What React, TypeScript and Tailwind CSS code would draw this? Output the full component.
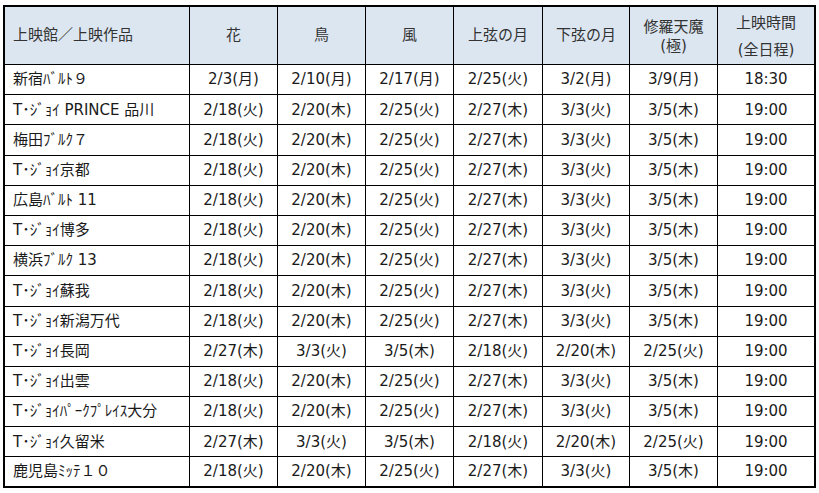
import React from "react";

const A = ["2/18(火)", "2/20(木)", "2/25(火)", "2/27(木)", "3/3(火)", "3/5(木)", "19:00"];
const B = ["2/27(木)", "3/3(火)", "3/5(木)", "2/18(火)", "2/20(木)", "2/25(火)", "19:00"];

const rows: [string, string[]][] = [
  ["新宿ﾊﾞﾙﾄ９", ["2/3(月)", "2/10(月)", "2/17(月)", "2/25(火)", "3/2(月)", "3/9(月)", "18:30"]],
  ["T･ｼﾞｮｲ PRINCE 品川", A],
  ["梅田ﾌﾞﾙｸ７", A],
  ["T･ｼﾞｮｲ京都", A],
  ["広島ﾊﾞﾙﾄ 11", A],
  ["T･ｼﾞｮｲ博多", A],
  ["横浜ﾌﾞﾙｸ 13", A],
  ["T･ｼﾞｮｲ蘇我", A],
  ["T･ｼﾞｮｲ新潟万代", A],
  ["T･ｼﾞｮｲ長岡", B],
  ["T･ｼﾞｮｲ出雲", A],
  ["T･ｼﾞｮｲﾊﾟｰｸﾌﾟﾚｲｽ大分", A],
  ["T･ｼﾞｮｲ久留米", B],
  ["鹿児島ﾐｯﾃ１０", A],
];

const head = "bg-[#dce6f1] border-r border-b border-black h-[58px] flex items-center justify-center text-[#333]";
const cell = "border-r border-b border-black h-[30.2px] flex items-center justify-center";

export default function App() {
  return (
    <div className="bg-white w-[819px] h-[493px] pt-[5px] pl-[3px] text-[15px] text-[#1a1a1a] font-['DejaVu_Sans','Noto_Sans_CJK_JP',sans-serif]">
      <div className="grid grid-cols-[185px_88px_88px_88px_89px_87px_88px_98px] w-max border-l-2 border-t-2 border-black">
        <div className={head + " !justify-start pl-[8px]"}>上映館／上映作品</div>
        <div className={head}>花</div>
        <div className={head}>鳥</div>
        <div className={head}>風</div>
        <div className={head}>上弦の月</div>
        <div className={head}>下弦の月</div>
        <div className={head + " flex-col leading-[19px] pt-[3px]"}>
          <span>修羅天魔</span>
          <span>(極)</span>
        </div>
        <div className={head + " flex-col leading-[27px] pt-[3px] !border-r-2"}>
          <span>上映時間</span>
          <span>(全日程)</span>
        </div>
        {rows.map(([name, vals], i) => (
          <React.Fragment key={i}>
            <div className={cell + " !justify-start pl-[8px]" + (i === rows.length - 1 ? " !border-b-2" : "")}>{name}</div>
            {vals.map((v, j) => (
              <div
                key={j}
                className={
                  cell +
                  (j === vals.length - 1 ? " !border-r-2" : "") +
                  (i === rows.length - 1 ? " !border-b-2" : "")
                }
              >
                {v}
              </div>
            ))}
          </React.Fragment>
        ))}
      </div>
    </div>
  );
}
